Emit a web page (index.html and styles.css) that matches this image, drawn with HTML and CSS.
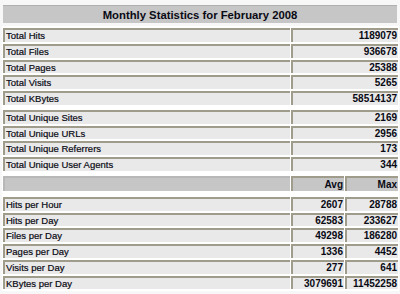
FILE: index.html
```html
<!DOCTYPE html>
<html>
<head>
<meta charset="utf-8">
<link rel="stylesheet" href="styles.css">
</head>
<body>
<div class="page">
  <div class="title">Monthly Statistics for February 2008</div>
  <table class="stats">
    <colgroup><col class="c-label"><col class="c-avg"><col class="c-max"></colgroup>
    <tbody>
      <tr><td class="lbl">Total Hits</td><td class="num" colspan="2">1189079</td></tr>
      <tr><td class="lbl">Total Files</td><td class="num" colspan="2">936678</td></tr>
      <tr><td class="lbl">Total Pages</td><td class="num" colspan="2">25388</td></tr>
      <tr><td class="lbl">Total Visits</td><td class="num" colspan="2">5265</td></tr>
      <tr><td class="lbl">Total KBytes</td><td class="num" colspan="2">58514137</td></tr>
      <tr class="sep"><td colspan="3"></td></tr>
      <tr><td class="lbl">Total Unique Sites</td><td class="num" colspan="2">2169</td></tr>
      <tr><td class="lbl">Total Unique URLs</td><td class="num" colspan="2">2956</td></tr>
      <tr><td class="lbl">Total Unique Referrers</td><td class="num" colspan="2">173</td></tr>
      <tr><td class="lbl">Total Unique User Agents</td><td class="num" colspan="2">344</td></tr>
      <tr class="sep"><td colspan="3"></td></tr>
      <tr class="head"><td></td><td class="num">Avg</td><td class="num">Max</td></tr>
      <tr class="sep2"><td colspan="3"></td></tr>
      <tr><td class="lbl">Hits per Hour</td><td class="num">2607</td><td class="num">28788</td></tr>
      <tr><td class="lbl">Hits per Day</td><td class="num">62583</td><td class="num">233627</td></tr>
      <tr><td class="lbl">Files per Day</td><td class="num">49298</td><td class="num">186280</td></tr>
      <tr><td class="lbl">Pages per Day</td><td class="num">1336</td><td class="num">4452</td></tr>
      <tr><td class="lbl">Visits per Day</td><td class="num">277</td><td class="num">641</td></tr>
      <tr><td class="lbl">KBytes per Day</td><td class="num">3079691</td><td class="num">11452258</td></tr>
    </tbody>
  </table>
</div>
</body>
</html>
```
FILE: styles.css
```css
html, body {
  margin: 0;
  padding: 0;
  background: #f7f7f7;
}
.page {
  padding: 5px 3px 0 3px;
  font-family: "Liberation Sans", Arial, sans-serif;
  color: #000;
}
.title {
  height: 18px;
  line-height: 18px;
  background: #c6c6c6;
  border-top: 1px solid #b0b0b0;
  box-sizing: border-box;
  text-align: center;
  font-weight: bold;
  font-size: 11.3px;
  color: #0a0a14;
}
.stats {
  margin: 3px 0 0 -1px;
  width: 395px;
  border-collapse: separate;
  border-spacing: 1px 2px;
  background: #ffffff;
  table-layout: fixed;
  font-size: 9.5px;
}
.c-label { width: 287px; }
.c-avg { width: 53px; }
.c-max { width: 53px; }
.stats td {
  height: 13.75px;
  padding: 0 1px 0 1px;
  box-sizing: border-box;
  background: #e9e9e9;
  border-top: 2px solid #9f9c8c;
  border-left: 2px solid #9f9c8c;
  line-height: 11.75px;
  white-space: nowrap;
  overflow: hidden;
  vertical-align: middle;
  color: #0a0a14;
}
.stats td.lbl {
  -webkit-text-stroke: 0.2px #0a0a14;
}
.stats td.num {
  text-align: right;
  font-weight: bold;
  font-size: 10px;
}
.stats tr.sep td {
  height: 1px;
  padding: 0;
  border: 0;
  background: transparent;
}
.stats tr.sep2 td {
  height: 2px;
  padding: 0;
  border: 0;
  background: transparent;
}
.stats tr.head td {
  background: #c6c6c6;
  height: 15px;
  line-height: 13px;
  border-top-color: #b8b8b8;
  border-left-color: #b8b8b8;
}
.stats tr.head td.num {
  border-top-color: #9f9c8c;
  border-left-color: #9f9c8c;
}
```
